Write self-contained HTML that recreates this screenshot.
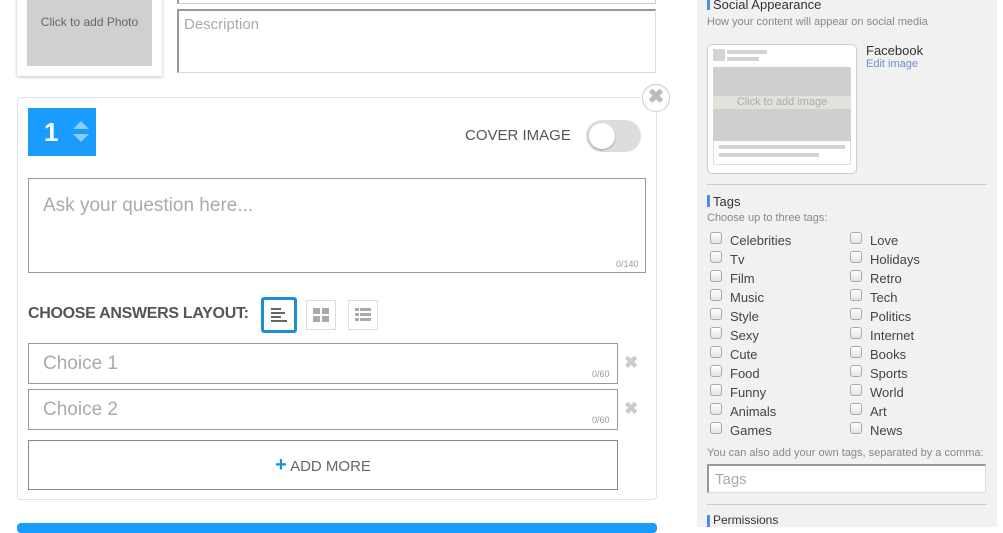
<!DOCTYPE html>
<html><head><style>
*{box-sizing:border-box;margin:0;padding:0}
body{width:1003px;height:527px;overflow:hidden;background:#fff;font-family:"Liberation Sans",sans-serif;position:relative}
.a{position:absolute}
.cb{position:absolute;width:12px;height:12px;border:1px solid #aaa;border-radius:3px;background:linear-gradient(#fff,#e3e3e3)}
.tg{position:absolute;font-size:13px;color:#444}
</style></head><body>
<div class="a" style="left:17px;top:-5px;width:145px;height:81px;background:#fff;box-shadow:0 1px 3px rgba(0,0,0,.25)"></div>
<div class="a" style="left:27px;top:-5px;width:125px;height:71px;background:#d0d0d0;color:#666;font-size:12px;text-align:center;line-height:54px">Click to add Photo</div>
<div class="a" style="left:177px;top:-5px;width:479px;height:9px;border:1px solid #ccc;border-left:2px solid #999"></div>
<div class="a" style="left:177px;top:9px;width:479px;height:64px;border:1px solid #ddd;border-top:2px solid #999;border-left:2px solid #999;font-size:15px;color:#aaa;padding:5px 5px">Description</div>
<div class="a" style="left:17px;top:97px;width:640px;height:403px;border:1px solid #e2e2e2;border-radius:4px"></div>
<div class="a" style="left:642px;top:84px;width:28px;height:28px;border:1px solid #ccc;border-radius:50%;background:#fff;color:#bbb;font-size:20px;font-weight:bold;text-align:center;line-height:25px">✖</div>
<div class="a" style="left:28px;top:108px;width:68px;height:48px;background:#1a9cff"></div>
<div class="a" style="left:44px;top:117px;color:#fff;font-size:26px;font-weight:bold">1</div>
<svg class="a" style="left:72px;top:119px" width="18" height="26"><path d="M1 10 L9 2 L17 10Z M1 15 L9 23 L17 15Z" fill="#8dcaff"/></svg>
<div class="a" style="left:465px;top:127px;font-size:15px;color:#555">COVER IMAGE</div>
<div class="a" style="left:586px;top:120px;width:55px;height:32px;border-radius:16px;background:#ddd"></div>
<div class="a" style="left:589px;top:123px;width:26px;height:26px;border-radius:50%;background:#fff;box-shadow:0 1px 2px rgba(0,0,0,.3)"></div>
<div class="a" style="left:28px;top:178px;width:618px;height:95px;border:1px solid #999;font-size:19px;color:#aaa;padding:16px 14px">Ask your question here...</div>
<div class="a" style="left:616px;top:259px;font-size:9px;color:#999">0/140</div>
<div class="a" style="left:28px;top:305px;font-size:16px;color:#555;font-weight:bold;letter-spacing:-0.3px">CHOOSE ANSWERS LAYOUT:</div>
<div class="a" style="left:261px;top:297px;width:36px;height:36px;border:3px solid #1a8fd8;border-radius:3px"></div>
<svg class="a" style="left:270px;top:306px" width="18" height="18"><g fill="#666"><rect x="1" y="2" width="10" height="2"/><rect x="1" y="6" width="14" height="2"/><rect x="1" y="10" width="10" height="2"/><rect x="1" y="14" width="16" height="2"/></g></svg>
<div class="a" style="left:306px;top:300px;width:30px;height:30px;border:1px solid #ddd"></div>
<svg class="a" style="left:313px;top:308px" width="16" height="14"><g fill="#aaa"><rect x="0" y="0" width="7" height="6"/><rect x="9" y="0" width="7" height="6"/><rect x="0" y="8" width="7" height="6"/><rect x="9" y="8" width="7" height="6"/></g></svg>
<div class="a" style="left:348px;top:300px;width:30px;height:30px;border:1px solid #ddd"></div>
<svg class="a" style="left:355px;top:308px" width="16" height="14"><g fill="#aaa"><rect x="0" y="0" width="4" height="3"/><rect x="5" y="0" width="11" height="3"/><rect x="0" y="5" width="4" height="3"/><rect x="5" y="5" width="11" height="3"/><rect x="0" y="10" width="4" height="3"/><rect x="5" y="10" width="11" height="3"/></g></svg>
<div class="a" style="left:28px;top:343px;width:590px;height:41px;border:1px solid #999;font-size:19px;color:#aaa;padding:9px 14px">Choice 1</div>
<div class="a" style="left:592px;top:369px;font-size:9px;color:#999">0/60</div>
<div class="a" style="left:624px;top:353px;font-size:17px;color:#ccc;font-weight:bold">✖</div>
<div class="a" style="left:28px;top:389px;width:590px;height:41px;border:1px solid #999;font-size:19px;color:#aaa;padding:9px 14px">Choice 2</div>
<div class="a" style="left:592px;top:415px;font-size:9px;color:#999">0/60</div>
<div class="a" style="left:624px;top:399px;font-size:17px;color:#ccc;font-weight:bold">✖</div>
<div class="a" style="left:28px;top:440px;width:590px;height:50px;border:1px solid #888;text-align:center;line-height:48px;font-size:15px;color:#666"><span style="color:#1a8fd8;font-size:20px;font-weight:bold">+</span> ADD MORE</div>
<div class="a" style="left:17px;top:523px;width:640px;height:10px;border-radius:4px;background:#1a9cff"></div>
<div class="a" style="left:697px;top:0;width:300px;height:527px;background:#f1f1f1"></div>
<div class="a" style="left:707px;top:-2px;width:3px;height:12px;background:#4a8fe0"></div>
<div class="a" style="left:713px;top:-3px;font-size:13px;color:#333">Social Appearance</div>
<div class="a" style="left:707px;top:16px;font-size:11px;color:#888">How your content will appear on social media</div>
<div class="a" style="left:707px;top:44px;width:150px;height:130px;background:#fff;border:1px solid #ccc;border-radius:5px"></div>
<div class="a" style="left:713px;top:49px;width:12px;height:12px;background:#d3d3d3"></div>
<div class="a" style="left:727px;top:50px;width:40px;height:4px;background:#d3d3d3"></div>
<div class="a" style="left:727px;top:57px;width:32px;height:4px;background:#d3d3d3"></div>
<div class="a" style="left:713px;top:67px;width:138px;height:74px;background:#cfcfcf"></div>
<div class="a" style="left:713px;top:96px;width:138px;height:13px;background:#e2e2da;text-align:center;font-size:11px;color:#aaa;line-height:13px">Click to add image</div>
<div class="a" style="left:713px;top:141px;width:138px;height:24px;border:1px solid #ddd;border-top:none"></div>
<div class="a" style="left:719px;top:145px;width:126px;height:4px;background:#d3d3d3"></div>
<div class="a" style="left:719px;top:153px;width:100px;height:4px;background:#d3d3d3"></div>
<div class="a" style="left:866px;top:43px;font-size:13px;color:#333">Facebook</div>
<div class="a" style="left:866px;top:58px;font-size:11px;color:#6a8fd0">Edit image</div>
<div class="a" style="left:707px;top:184px;width:280px;height:1px;background:#ccc"></div>
<div class="a" style="left:707px;top:195px;width:3px;height:12px;background:#4a8fe0"></div>
<div class="a" style="left:713px;top:194px;font-size:13px;color:#333">Tags</div>
<div class="a" style="left:707px;top:212px;font-size:11px;color:#888">Choose up to three tags:</div>
<div class="cb" style="left:710px;top:232px"></div><div class="tg" style="left:730px;top:233px">Celebrities</div>
<div class="cb" style="left:850px;top:232px"></div><div class="tg" style="left:870px;top:233px">Love</div>
<div class="cb" style="left:710px;top:251px"></div><div class="tg" style="left:730px;top:252px">Tv</div>
<div class="cb" style="left:850px;top:251px"></div><div class="tg" style="left:870px;top:252px">Holidays</div>
<div class="cb" style="left:710px;top:270px"></div><div class="tg" style="left:730px;top:271px">Film</div>
<div class="cb" style="left:850px;top:270px"></div><div class="tg" style="left:870px;top:271px">Retro</div>
<div class="cb" style="left:710px;top:289px"></div><div class="tg" style="left:730px;top:290px">Music</div>
<div class="cb" style="left:850px;top:289px"></div><div class="tg" style="left:870px;top:290px">Tech</div>
<div class="cb" style="left:710px;top:308px"></div><div class="tg" style="left:730px;top:309px">Style</div>
<div class="cb" style="left:850px;top:308px"></div><div class="tg" style="left:870px;top:309px">Politics</div>
<div class="cb" style="left:710px;top:327px"></div><div class="tg" style="left:730px;top:328px">Sexy</div>
<div class="cb" style="left:850px;top:327px"></div><div class="tg" style="left:870px;top:328px">Internet</div>
<div class="cb" style="left:710px;top:346px"></div><div class="tg" style="left:730px;top:347px">Cute</div>
<div class="cb" style="left:850px;top:346px"></div><div class="tg" style="left:870px;top:347px">Books</div>
<div class="cb" style="left:710px;top:365px"></div><div class="tg" style="left:730px;top:366px">Food</div>
<div class="cb" style="left:850px;top:365px"></div><div class="tg" style="left:870px;top:366px">Sports</div>
<div class="cb" style="left:710px;top:384px"></div><div class="tg" style="left:730px;top:385px">Funny</div>
<div class="cb" style="left:850px;top:384px"></div><div class="tg" style="left:870px;top:385px">World</div>
<div class="cb" style="left:710px;top:403px"></div><div class="tg" style="left:730px;top:404px">Animals</div>
<div class="cb" style="left:850px;top:403px"></div><div class="tg" style="left:870px;top:404px">Art</div>
<div class="cb" style="left:710px;top:422px"></div><div class="tg" style="left:730px;top:423px">Games</div>
<div class="cb" style="left:850px;top:422px"></div><div class="tg" style="left:870px;top:423px">News</div>
<div class="a" style="left:707px;top:447px;font-size:11px;color:#888">You can also add your own tags, separated by a comma:</div>
<div class="a" style="left:707px;top:464px;width:279px;height:29px;background:#fff;border:1px solid #ddd;border-top:2px solid #999;border-left:2px solid #999;font-size:15px;color:#aaa;padding:5px 6px">Tags</div>
<div class="a" style="left:707px;top:504px;width:280px;height:1px;background:#ccc"></div>
<div class="a" style="left:707px;top:515px;width:3px;height:12px;background:#4a8fe0"></div>
<div class="a" style="left:713px;top:513px;font-size:12px;color:#333">Permissions</div>
</body></html>
